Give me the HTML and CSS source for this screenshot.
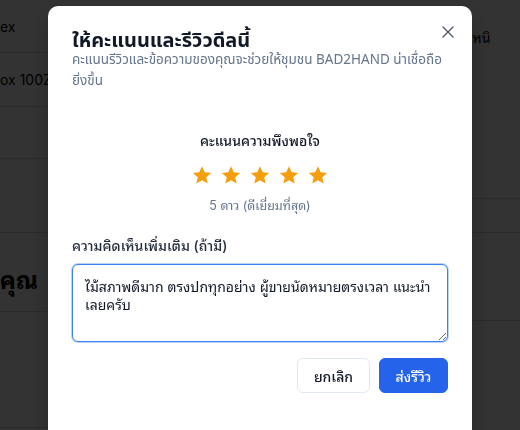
FILE: index.html
```html
<!DOCTYPE html>
<html lang="th">
<head>
<meta charset="utf-8">
<link rel="stylesheet" href="styles.css">
</head>
<body>
<div class="page">
  <div class="col-left">
    <div class="row r1"><span>ex</span></div>
    <div class="row r2"><span>ox 100ZZ</span></div>
    <div class="row r3"></div>
    <div class="row r4"></div>
    <div class="row r5"><span>ของคุณ</span></div>
    <div class="row r6"></div>
  </div>
  <div class="col-right">
    <div class="row q1"><span>ตำหนิ</span></div>
    <div class="row q3"></div>
    <div class="row q4"></div>
  </div>
</div>
<div class="overlay"></div>
<div class="modal" role="dialog">
  <button class="close" aria-label="close">
    <svg width="14" height="14" viewBox="0 0 14 14"><path d="M2 2L12 12M12 2L2 12" stroke="#4b5563" stroke-width="1.3" stroke-linecap="round"/></svg>
  </button>
  <h2 class="title">ให้คะแนนและรีวิวดีลนี้</h2>
  <p class="subtitle">คะแนนรีวิวและข้อความของคุณจะช่วยให้ชุมชน BAD2HAND น่าเชื่อถือยิ่งขึ้น</p>
  <div class="rating">
    <div class="rating-label">คะแนนความพึงพอใจ</div>
    <div class="stars">
      <svg class="star" viewBox="0 0 24 24"><path d="M12 2.5l2.9 6.6 7.1.6-5.4 4.7 1.6 7-6.2-3.7-6.2 3.7 1.6-7L2 9.7l7.1-.6z"/></svg>
      <svg class="star" viewBox="0 0 24 24"><path d="M12 2.5l2.9 6.6 7.1.6-5.4 4.7 1.6 7-6.2-3.7-6.2 3.7 1.6-7L2 9.7l7.1-.6z"/></svg>
      <svg class="star" viewBox="0 0 24 24"><path d="M12 2.5l2.9 6.6 7.1.6-5.4 4.7 1.6 7-6.2-3.7-6.2 3.7 1.6-7L2 9.7l7.1-.6z"/></svg>
      <svg class="star" viewBox="0 0 24 24"><path d="M12 2.5l2.9 6.6 7.1.6-5.4 4.7 1.6 7-6.2-3.7-6.2 3.7 1.6-7L2 9.7l7.1-.6z"/></svg>
      <svg class="star" viewBox="0 0 24 24"><path d="M12 2.5l2.9 6.6 7.1.6-5.4 4.7 1.6 7-6.2-3.7-6.2 3.7 1.6-7L2 9.7l7.1-.6z"/></svg>
    </div>
    <div class="rating-text">5 ดาว (ดีเยี่ยมที่สุด)</div>
  </div>
  <label class="field-label" for="c">ความคิดเห็นเพิ่มเติม (ถ้ามี)</label>
  <textarea id="c" class="comment">ไม้สภาพดีมาก ตรงปกทุกอย่าง ผู้ขายนัดหมายตรงเวลา แนะนำเลยครับ</textarea>
  <div class="actions">
    <button class="btn btn-cancel">ยกเลิก</button>
    <button class="btn btn-primary">ส่งรีวิว</button>
  </div>
</div>
</body>
</html>
```

FILE: styles.css
```css
* { box-sizing: border-box; }
html, body { margin: 0; padding: 0; }
body {
  width: 520px;
  height: 430px;
  overflow: hidden;
  background: #ffffff;
  font-family: Inter, "Noto Sans Thai Looped", sans-serif;
  color: #111827;
}
.page {
  display: flex;
  justify-content: space-between;
  height: 430px;
}
.col-left { width: 48px; }
.col-right { width: 62px; }
.row {
  border-bottom: 1px solid #d1d5db;
  display: flex;
  align-items: center;
  white-space: nowrap;
  overflow: hidden;
  font-size: 14px;
  color: #000;
}
.r1 { height: 53px; }
.r2 { height: 54px; }
.r3 { height: 52px; }
.r4 { height: 74px; }
.r5 {
  height: 79px;
  padding-top: 12px;
  justify-content: flex-end;
  font-size: 24px;
  font-weight: 700;
}
.r5 span { margin-right: 10px; }
.r6 { height: 116px; }
.q1 {
  height: 199px;
  align-items: flex-start;
  padding-top: 25px;
}
.q3 { height: 34px; }
.q4 { height: 88px; }
.overlay {
  position: fixed;
  inset: 0;
  background: rgba(0, 0, 0, 0.8);
}
.modal {
  position: fixed;
  left: 48px;
  top: 6px;
  width: 424px;
  height: 460px;
  background: #fff;
  border-radius: 10px;
  padding: 26px 24px 24px;
  box-shadow: 0 10px 25px rgba(0,0,0,0.25);
  display: flex;
  flex-direction: column;
}
.close {
  position: absolute;
  right: 13px;
  top: 15px;
  width: 22px;
  height: 22px;
  padding: 4px;
  border: 0;
  background: none;
  display: flex;
  align-items: center;
  justify-content: center;
}
.title {
  margin: 0;
  font-family: "Noto Sans Thai", Inter, sans-serif;
  font-size: 20px;
  line-height: 18px;
  font-weight: 700;
  color: #111827;
}
.subtitle {
  margin: 0;
  font-family: "Noto Sans Thai", Inter, sans-serif;
  font-size: 13.5px;
  line-height: 21px;
  color: #64748b;
}
.rating {
  margin-top: 39px;
  display: flex;
  flex-direction: column;
  align-items: center;
}
.rating-label {
  font-size: 14px;
  line-height: 20px;
  font-weight: 500;
  color: #111827;
}
.stars {
  margin-top: 13px;
  display: flex;
  gap: 7px;
}
.star { width: 22px; height: 22px; fill: #f59e0b; }
.rating-text {
  margin-top: 10px;
  font-size: 12.5px;
  line-height: 20px;
  color: #64748b;
}
.field-label {
  margin-top: 20px;
  font-size: 14px;
  line-height: 20px;
  font-weight: 500;
  color: #1f2937;
}
.comment {
  margin-top: 8px;
  width: 376px;
  height: 78px;
  padding: 13px 12px 8px;
  border: 1px solid #3b82f6;
  border-radius: 6px;
  box-shadow: 0 0 0 1px rgba(59,130,246,0.35);
  font-family: Inter, "Noto Sans Thai Looped", sans-serif;
  font-size: 14px;
  line-height: 18px;
  color: #111827;
  resize: vertical;
  outline: none;
}
.actions {
  margin-top: 16px;
  display: flex;
  justify-content: flex-end;
  gap: 9px;
}
.btn {
  height: 35px;
  padding: 0;
  border-radius: 6px;
  font-family: Inter, "Noto Sans Thai Looped", sans-serif;
  font-size: 14px;
  font-weight: 500;
}
.btn-cancel {
  width: 73px;
  background: #fff;
  border: 1px solid #e2e8f0;
  color: #111827;
}
.btn-primary {
  width: 69px;
  background: #2563eb;
  border: 1px solid #2563eb;
  color: #fff;
}
```
